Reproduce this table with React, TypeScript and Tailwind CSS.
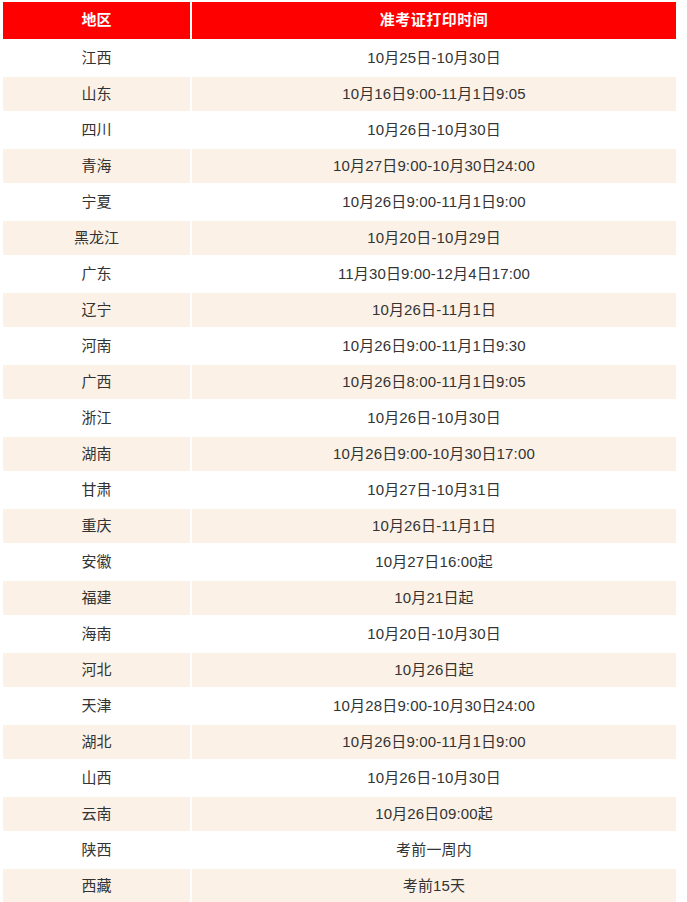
import React from "react";

const rows: [string, string][] = [
  ["江西", "10月25日-10月30日"],
  ["山东", "10月16日9:00-11月1日9:05"],
  ["四川", "10月26日-10月30日"],
  ["青海", "10月27日9:00-10月30日24:00"],
  ["宁夏", "10月26日9:00-11月1日9:00"],
  ["黑龙江", "10月20日-10月29日"],
  ["广东", "11月30日9:00-12月4日17:00"],
  ["辽宁", "10月26日-11月1日"],
  ["河南", "10月26日9:00-11月1日9:30"],
  ["广西", "10月26日8:00-11月1日9:05"],
  ["浙江", "10月26日-10月30日"],
  ["湖南", "10月26日9:00-10月30日17:00"],
  ["甘肃", "10月27日-10月31日"],
  ["重庆", "10月26日-11月1日"],
  ["安徽", "10月27日16:00起"],
  ["福建", "10月21日起"],
  ["海南", "10月20日-10月30日"],
  ["河北", "10月26日起"],
  ["天津", "10月28日9:00-10月30日24:00"],
  ["湖北", "10月26日9:00-11月1日9:00"],
  ["山西", "10月26日-10月30日"],
  ["云南", "10月26日09:00起"],
  ["陕西", "考前一周内"],
  ["西藏", "考前15天"],
];

export default function App() {
  return (
    <div className="w-[687px] bg-white pl-[3px] pt-[2px] font-['Liberation_Sans','Noto_Sans_CJK_SC',sans-serif] text-[15px] text-[#333]">
      <div className="grid grid-cols-[187px_484px] gap-[2px]">
        {/* HEADER */}
        <div className="h-[37px] bg-[#ff0000] text-white font-bold flex items-center justify-center">地区</div>
        <div className="h-[37px] bg-[#ff0000] text-white font-bold tracking-[0.5px] flex items-center justify-center">准考证打印时间</div>

        {rows.map(([region, time], i) => {
          const bg = i % 2 === 1 ? "bg-[#fbf1e6]" : "bg-white";
          return (
            <React.Fragment key={region}>
              <div className={`h-[34px] flex items-center justify-center ${bg}`}>{region}</div>
              <div className={`h-[34px] flex items-center justify-center tracking-[0.15px] ${bg}`}>{time}</div>
            </React.Fragment>
          );
        })}
      </div>
    </div>
  );
}
